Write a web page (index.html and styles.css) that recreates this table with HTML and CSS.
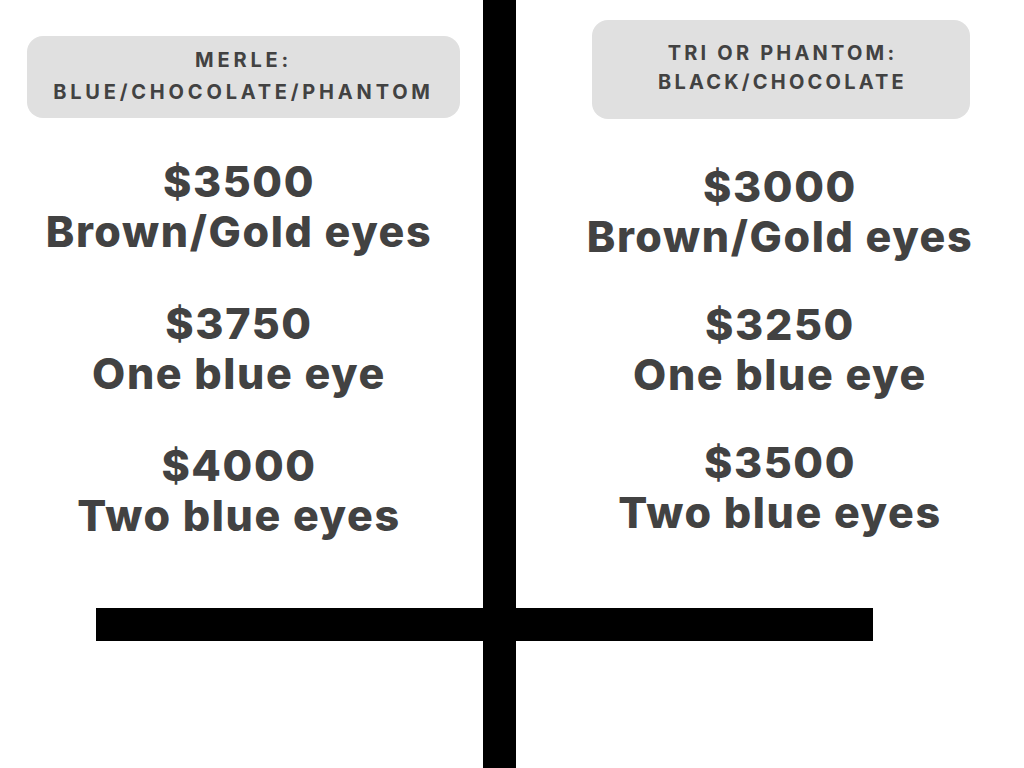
FILE: index.html
```html
<!DOCTYPE html>
<html lang="en">
<head>
<meta charset="utf-8">
<title>Pricing</title>
<link rel="stylesheet" href="styles.css">
</head>
<body>
<main class="board">
  <section class="col col-left">
    <div class="tag tag-left">MERLE:<br>BLUE/CHOCOLATE/PHANTOM</div>
    <div class="prices prices-left">
      <p class="price">$3500<br>Brown/Gold eyes</p>
      <p class="price">$3750<br>One blue eye</p>
      <p class="price">$4000<br>Two blue eyes</p>
    </div>
  </section>
  <div class="vbar"></div>
  <section class="col col-right">
    <div class="tag tag-right">TRI OR PHANTOM:<br>BLACK/CHOCOLATE</div>
    <div class="prices prices-right">
      <p class="price">$3000<br>Brown/Gold eyes</p>
      <p class="price">$3250<br>One blue eye</p>
      <p class="price">$3500<br>Two blue eyes</p>
    </div>
  </section>
  <div class="hbar"></div>
</main>
</body>
</html>
```
FILE: styles.css
```css
html, body {
  margin: 0;
  padding: 0;
  background: #ffffff;
}
body {
  font-family: Inter, "Liberation Sans", sans-serif;
  color: #424242;
}
.board {
  display: grid;
  grid-template-columns: 483px 33px 1fr;
  grid-template-rows: 608px 33px 127px;
  width: 1024px;
  height: 768px;
  overflow: hidden;
}
.col {
  grid-row: 1;
  display: flex;
  flex-direction: column;
}
.col-left { grid-column: 1; }
.col-right { grid-column: 3; }
.vbar {
  grid-column: 2;
  grid-row: 1 / 4;
  background: #000;
}
.hbar {
  grid-column: 1 / 4;
  grid-row: 2;
  margin-left: 96px;
  margin-right: 151px;
  background: #000;
}
.tag {
  background: #e0e0e0;
  border-radius: 16px;
  text-align: center;
  font-weight: 700;
  font-size: 20px;
  box-sizing: border-box;
}
.tag-left {
  margin: 36px 0 0 27px;
  width: 433px;
  height: 82px;
  padding-top: 8px;
  letter-spacing: 3.8px;
  line-height: 32px;
}
.tag-right {
  margin: 20px 0 0 76px;
  width: 378px;
  height: 99px;
  padding-top: 19px;
  padding-left: 3px;
  letter-spacing: 3.2px;
  line-height: 29px;
}
.prices {
  display: flex;
  flex-direction: column;
  align-items: center;
}
.prices-left {
  padding-right: 5px;
  margin-top: 38px;
  gap: 42px;
}
.prices-right {
  padding-left: 20px;
  margin-top: 42px;
  gap: 38px;
}
.price {
  margin: 0;
  font-size: 43px;
  font-weight: 800;
  line-height: 50px;
  letter-spacing: 1.6px;
  text-align: center;
}
```
